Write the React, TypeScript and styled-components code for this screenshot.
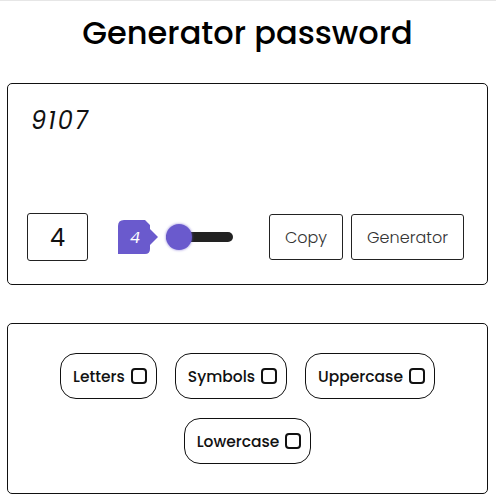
import React, {FC, useState} from "react";
import styled, {createGlobalStyle} from "styled-components";

const FONT = `"Poppins", "Inter", "Noto Sans", sans-serif`;

const GlobalStyle = createGlobalStyle`
  html, body {
    margin: 0;
    padding: 0;
    background: #ffffff;
  }
  body {
    border-top: 1px solid #e6e6e6;
    font-family: ${FONT};
    color: #111111;
  }
`

const OPTIONS: string[] = ["Letters", "Symbols", "Uppercase", "Lowercase"];

const Option: FC<{label: string}> = ({label}) => {
    const [checked, setChecked] = useState(false);
    return <Pill>
        {label}
        <Check type="checkbox" checked={checked} onChange={() => setChecked(!checked)}/>
    </Pill>
};

export default function App() {
    const [length, setLength] = useState(4);
    return <Page>
        <GlobalStyle/>
        <Title>Generator password</Title>
        <Card>
            <Password>9107</Password>
            <Controls>
                <LengthBox>{length}</LengthBox>
                <SliderWrap>
                    <Bubble>{length}</Bubble>
                    <Range
                        type="range"
                        min={4}
                        max={32}
                        value={length}
                        onChange={e => setLength(Number(e.target.value))}
                    />
                </SliderWrap>
                <Actions>
                    <Button>Copy</Button>
                    <Button>Generator</Button>
                </Actions>
            </Controls>
        </Card>
        <OptionsCard>
            {OPTIONS.map(o => <Option key={o} label={o}/>)}
        </OptionsCard>
    </Page>
}

const Page = styled.div`
  padding: 0 8px 7px 7px;
  display: flex;
  flex-direction: column;
`

const Title = styled.h1`
  margin: 11px 0 30px;
  text-align: center;
  font-size: 32px;
  line-height: 41px;
  font-weight: 500;
  color: #000000;
`

const Card = styled.div`
  border: 1px solid #111111;
  border-radius: 5px;
  height: 200px;
  padding: 0 23px 0 19px;
  display: flex;
  flex-direction: column;
  justify-content: space-between;
`

const Password = styled.div`
  margin-top: 22px;
  margin-left: 4px;
  font-size: 24px;
  line-height: 30px;
  font-style: italic;
  font-weight: 400;
  letter-spacing: 2px;
  color: #111111;
`

const Controls = styled.div`
  display: flex;
  align-items: center;
  margin-bottom: 23px;
`

const LengthBox = styled.div`
  width: 59px;
  height: 46px;
  border: 1px solid #222222;
  border-radius: 3px;
  display: flex;
  align-items: center;
  justify-content: center;
  font-size: 24px;
  color: #111111;
`

const SliderWrap = styled.div`
  display: flex;
  align-items: center;
  margin-left: 30px;
  gap: 8px;
`

const Bubble = styled.div`
  width: 40px;
  height: 34px;
  background: #6a5acd;
  clip-path: path('M6 0 H27 L32 5 V9 L40 17 L32 25 V29 Q32 34 27 34 H0 V6 Q0 0 6 0 Z');
  color: #ffffff;
  font-size: 16px;
  font-style: italic;
  display: flex;
  align-items: center;
  padding-left: 12px;
  box-sizing: border-box;
`

const Range = styled.input`
  -webkit-appearance: none;
  appearance: none;
  width: 67px;
  height: 26px;
  margin: 0;
  background: transparent;

  &::-webkit-slider-runnable-track {
    height: 10px;
    border-radius: 5px;
    background: #222222;
  }

  &::-webkit-slider-thumb {
    -webkit-appearance: none;
    width: 26px;
    height: 26px;
    margin-top: -8px;
    border-radius: 50%;
    background: #6a5acd;
    box-shadow: 0 0 2px 1px rgba(106, 90, 205, 0.35);
  }
`

const Actions = styled.div`
  margin-left: auto;
  display: flex;
  gap: 8px;
`

const Button = styled.button`
  height: 46px;
  padding: 0 15px;
  border: 1px solid #222222;
  border-radius: 3px;
  background: #ffffff;
  font-family: ${FONT};
  font-size: 16px;
  font-weight: 300;
  color: #333333;
  &:hover {
    cursor: pointer;
  }
`

const OptionsCard = styled.div`
  margin-top: 38px;
  border: 1px solid #111111;
  border-radius: 5px;
  padding: 29px 40px;
  display: flex;
  flex-wrap: wrap;
  justify-content: center;
  gap: 19px 18px;
`

const Pill = styled.label`
  height: 44px;
  padding: 0 9px 0 12px;
  border: 1px solid #111111;
  border-radius: 16px;
  display: flex;
  align-items: center;
  gap: 6px;
  font-size: 15.5px;
  font-weight: 500;
  color: #111111;
`

const Check = styled.input`
  -webkit-appearance: none;
  appearance: none;
  width: 16px;
  height: 16px;
  margin: 0;
  border: 2px solid #111111;
  border-radius: 4px;
  background: #ffffff;
`
